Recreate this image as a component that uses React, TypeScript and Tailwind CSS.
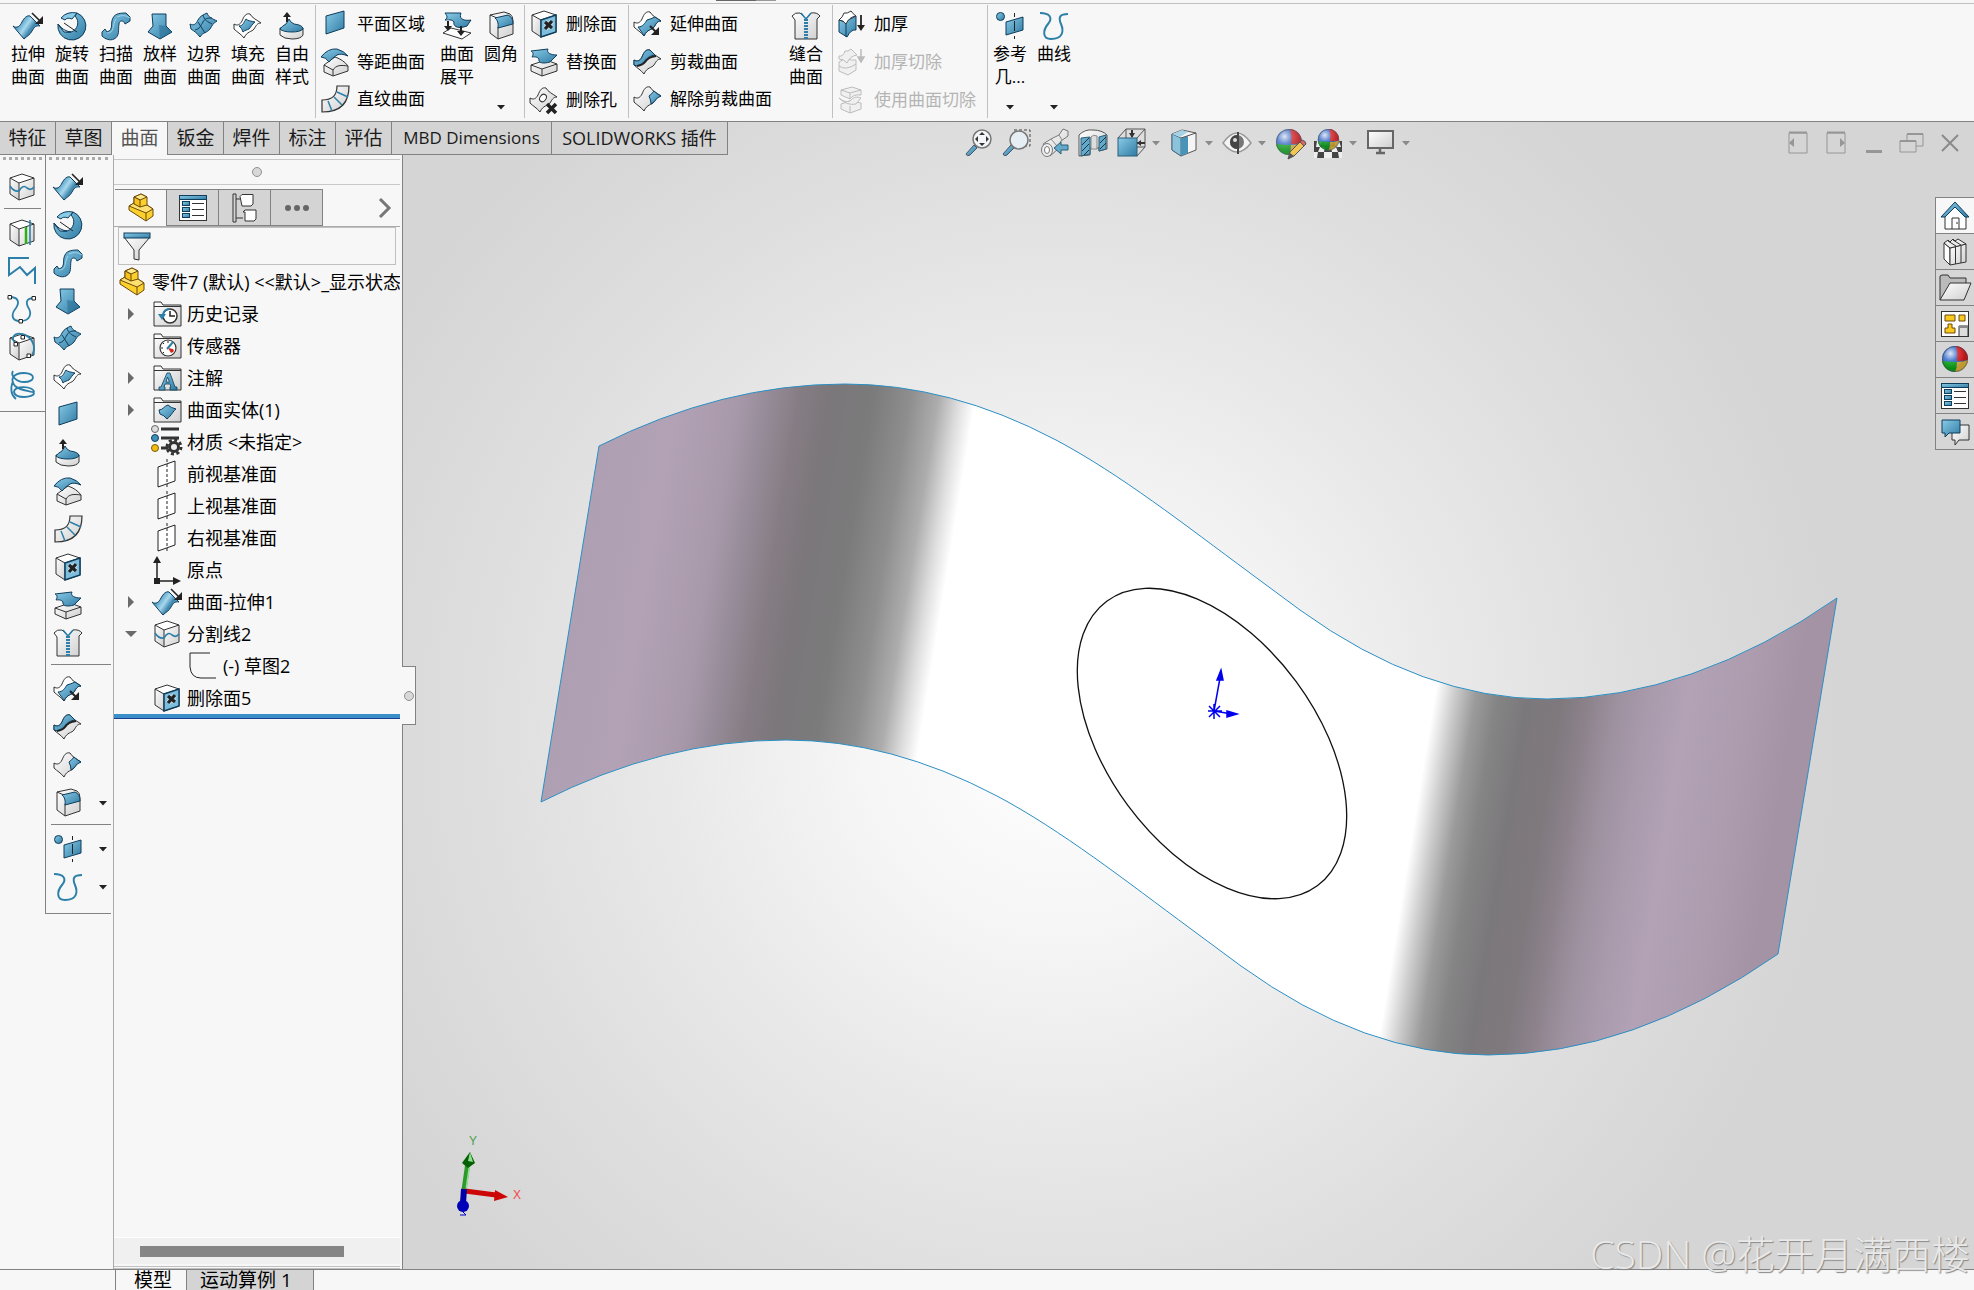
import { useState, type ReactNode } from "react";

const INK = "#333333";
const NAVY = "#0f3d5c";
const BLUE = "url(#gBlue)";
const WHITE = "url(#gWhite)";

const SHEET =
  "M0 12C3 14 6 13 8 9C10 4 12 1 16 2C18 6 23 8 27 11C23 11 22 14 20 17C18 20 13 19 10 26C7 22 3 20 0 17Z";

const Cube = () => (
  <>
    <path d="M2 5L14 1L26 5L11 10Z" fill="#fff" />
    <path d="M2 5L11 10V27L2 21Z" fill={WHITE} />
    <path d="M11 10L26 5V22L11 27Z" fill={WHITE} />
    <path d="M2 5L14 1L26 5V22L11 27L2 21ZM2 5L11 10L26 5M11 10V27" fill="none" stroke={INK} />
  </>
);

const Slab = () => (
  <>
    <path d="M1 17L16 12L27 16V23L12 28L1 23Z" fill={WHITE} stroke={INK} />
    <path d="M1 17L12 21L27 16M12 21V28" fill="none" stroke={INK} />
  </>
);

const Folder = () => (
  <>
    <path d="M1 24V2H8L10 5H28V26H1Z" fill={WHITE} stroke={INK} />
    <path d="M1 6.500H28" stroke={INK} />
  </>
);

const Ball = () => (
  <>
    <circle cx="14" cy="13" r="13" fill="#2f66c8" />
    <path d="M15 0A13 13 0 0 1 27 14Q21 15 16 15Q17 7 15 0Z" fill="#d8191d" />
    <path d="M1 15Q8 16 16 16Q16 22 14 26A13 13 0 0 1 1 15Z" fill="#0aa51c" />
    <path d="M16 16Q22 16 27 14A13 13 0 0 1 14 26Q16 22 16 16Z" fill="#e0b43a" />
    <circle cx="14" cy="13" r="12.500" fill="url(#gShine)" stroke="#444" strokeOpacity=".6" />
  </>
);

const List = () => (
  <>
    <rect x=".5" y="1.500" width="27" height="25" fill="#fff" stroke={INK} />
    <rect x=".5" y="1.500" width="27" height="4" fill={BLUE} stroke={NAVY} />
    {[8, 14, 20].map((y) => (
      <g key={y}>
        <rect x="3.500" y={y - 0.5} width="7" height="4" fill={BLUE} stroke={NAVY} />
        <path d={`M13 ${y + 1.5}H25`} stroke={INK} />
      </g>
    ))}
  </>
);

const icons: Record<string, ReactNode> = {
  extrude: (
    <>
      <path
        d="M-1 14C3 17 6 14 8 10C10 6 13 3 16 4L26 14C21 13 20 16 18 19C16 23 13 24 10 27Z"
        fill="url(#gWave)"
        stroke={NAVY}
      />
      <path d="M18 1L27 10" stroke="#222" strokeWidth="1.600" />
      <path d="M29 4V12H21Z" fill="#222" />
    </>
  ),
  revolve: (
    <>
      <path d="M19 1A14 14 0 1 1 0 12C3 18 8 21 13 20C20 18 22 9 17 4Z" fill={BLUE} stroke={NAVY} />
      <path d="M3 6Q9 -1 19 1L14 7Q9 5 7 8Z" fill="#8acbe8" stroke={NAVY} />
      <path d="M0 12L6 20L13 20Q5 19 0 12Z" fill="#d9ecf5" stroke={NAVY} />
      <path d="M6 11L19 20" stroke="#222" />
    </>
  ),
  sweep: (
    <>
      <path
        d="M0 20L3 17L5 20C12 18 8 11 11 6C13 1 20 1 24 1L28 5V9L23 12C22 8 17 8 17 12C16 18 18 24 12 27C8 29 3 27 0 24Z"
        fill={BLUE}
        stroke={NAVY}
      />
      <path d="M15 5C20 3 23 3 28 6M5 21C13 21 10 13 14 7" fill="none" stroke="#9fd3ea" />
    </>
  ),
  loft: (
    <>
      <path d="M6 2H20V14L26 20L14 27L2 20L7 14Z" fill={BLUE} stroke={NAVY} />
      <path d="M13 13L14 27L26 20L20 14Z" fill="#24688f" fillOpacity=".5" />
    </>
  ),
  boundary: (
    <>
      <path
        d="M0 12C4 14 6 12 8 8C10 4 13 3 17 1C18 5 23 7 27 9C23 11 22 14 20 17C17 21 13 20 10 25C7 21 4 19 1 17Z"
        fill={BLUE}
        stroke={NAVY}
      />
      <path d="M5 18C10 17 11 13 13 10C15 6 18 6 22 6M8 10L15 21M13 3C14 8 18 10 22 12" fill="none" stroke={NAVY} />
    </>
  ),
  fill: (
    <>
      <path d={SHEET} fill="#fff" stroke={INK} />
      <path d="M5 14C9 14 10 10 12 7C14 9 17 9 21 10C18 12 17 15 15 17C13 18 11 18 9 20Q8 16 5 14Z" fill={BLUE} stroke={NAVY} />
    </>
  ),
  freeform: (
    <>
      <path d="M2 16V23Q6 27 14 27Q23 27 25 23V16Z" fill={WHITE} stroke={INK} />
      <path d="M2 17Q4 14 8 12Q10 9 11 7Q12 10 16 12Q25 13 25 17Q22 20 14 20Q5 20 2 17Z" fill={BLUE} stroke={NAVY} />
      <path d="M9 10V3" stroke="#222" strokeWidth="2" />
      <path d="M5 5L9 0L13 5Z" fill="#222" />
    </>
  ),
  planar: <path d="M5 6L23 1V18L5 24Z" fill={BLUE} stroke={NAVY} />,
  offset: (
    <>
      <path d="M3 17L14 9C20 11 24 14 27 18V23L12 28L3 24Z" fill={WHITE} stroke={INK} />
      <path d="M3 17L12 22V28M12 22C15 17 20 17 27 18" fill="none" stroke={INK} />
      <path d="M0 9Q7 0 16 1Q23 3 27 8Q20 5 16 7Q11 10 8 14Q5 9 0 9Z" fill={BLUE} stroke={NAVY} />
    </>
  ),
  ruled: (
    <>
      <path d="M16 1H28C28 17 21 27 1 27V15C12 15 16 10 16 1Z" fill={WHITE} stroke={INK} strokeWidth="1.200" />
      <path d="M16 7L27 12M13 12L21 20M7 16L11 26" stroke="#2c7fa8" strokeWidth="1.500" />
    </>
  ),
  flatten: (
    <>
      <path d="M0 21L8 16L28 21L19 27Z" fill="#fff" stroke={INK} />
      <path d="M2 1H18C15 8 23 9 28 8L24 14C13 18 10 13 11 10C9 7 5 8 2 8C6 5 3 3 2 1Z" fill={BLUE} stroke={NAVY} />
      <path d="M5 9V16M18 14V21" stroke="#222" strokeWidth="2" />
      <path d="M1 14H9L5 19ZM14 19H22L18 24Z" fill="#222" />
    </>
  ),
  fillet: (
    <>
      <path d="M3 3L17 0L23 2Q26 4 26 9V22L11 27L3 21Z" fill={WHITE} stroke={INK} />
      <path d="M11 15V27" stroke={INK} />
      <path d="M3 3L10 6" stroke={INK} />
      <path d="M8 6L21 3Q26 5 26 12L11 16Q12 9 8 6Z" fill={BLUE} stroke={NAVY} />
    </>
  ),
  deleteFace: (
    <>
      <Cube />
      <path d="M11 10L26 5V22L11 27Z" fill="#7dbedc" stroke={NAVY} strokeWidth="1.500" />
      <path d="M15 12L22 18M22 11L15 19" stroke="#b5dced" strokeWidth="5.500" />
      <path d="M15 12L22 18M22 11L15 19" stroke="#222" strokeWidth="3.200" />
    </>
  ),
  replaceFace: (
    <>
      <Slab />
      <path d="M1 3L18 1C16 5 21 7 27 7L20 14C13 16 8 15 9 11C7 8 3 9 2 9C4 6 3 4 1 3Z" fill={BLUE} stroke={NAVY} />
    </>
  ),
  deleteHole: (
    <>
      <path d={SHEET} fill={WHITE} stroke={INK} />
      <ellipse cx="13" cy="12" rx="3" ry="4" fill="#fff" stroke={INK} transform="rotate(35 13 12)" />
      <path d="M17 18L26 27M26 18L17 27" stroke="#222" strokeWidth="3.500" />
    </>
  ),
  extend: (
    <>
      <path d={SHEET} fill="#fff" stroke={INK} />
      <path d="M4 17C9 17 11 13 13 10Q17 9 21 7Q24 9 27 11C23 11 22 14 20 17C18 20 13 19 10 26C8 22 6 20 4 17Z" fill={BLUE} stroke={NAVY} />
      <path d="M16 16L23 23" stroke="#222" strokeWidth="2" />
      <path d="M25 17V25H17Z" fill="#222" />
    </>
  ),
  trim: (
    <>
      <path d={SHEET} fill={WHITE} stroke={INK} />
      <path d="M0 12C3 14 6 13 8 9C10 4 12 1 16 2L21 7C16 8 14 9 11 13Q9 16 3 18L0 17Z" fill={BLUE} stroke={NAVY} />
      <path d="M3 18Q9 17 11 14Q14 9 22 8" fill="none" stroke="#222" strokeWidth="2" />
    </>
  ),
  untrim: (
    <>
      <path d={SHEET} fill={WHITE} stroke={INK} />
      <path d="M15 11Q18 9 20 6Q23 9 27 11Q23 12 20 17L17 19Q17 15 15 11Z" fill={BLUE} stroke={NAVY} />
    </>
  ),
  knit: (
    <>
      <path d="M0 4Q3 0 8 1L14 7L19 1Q25 0 28 4L25 7V27H3V8Z" fill={WHITE} stroke={INK} />
      <path d="M9 1L14 7L19 1" fill="none" stroke="#2c7fa8" strokeWidth="1.500" />
      <path d="M14 7V27" stroke="#2c7fa8" strokeWidth="4" strokeDasharray="2 1" />
    </>
  ),
  thicken: (
    <>
      <path d="M1 10L7 12Q12 9 18 6V20Q13 19 9 27L1 22Z" fill={BLUE} stroke={NAVY} />
      <path d="M1 10Q5 7 6 3Q9 4 13 1Q15 4 18 6Q11 7 8 14Q5 10 1 10Z" fill="#fff" stroke={INK} />
      <path d="M8 14V27" stroke={NAVY} />
      <path d="M23 5V17" stroke="#222" strokeWidth="1.800" />
      <path d="M19 15H27L23 21Z" fill="#222" />
    </>
  ),
  thickenCut: (
    <g stroke="#bcbcbc" fill="#f0f0f0">
      <path d="M1 14L8 10Q14 13 18 12V22L10 27L1 23Z" />
      <path d="M1 8Q5 9 7 3Q10 4 13 1L19 7Q12 8 9 15Q6 11 1 11Z" />
      <path d="M1 18Q8 23 18 16" fill="none" />
      <path d="M23 1V12M20 9L23 14L26 9Z" fill="#bcbcbc" strokeWidth="1.500" />
    </g>
  ),
  surfaceCut: (
    <g stroke="#bcbcbc" fill="#f0f0f0">
      <path d="M3 4L14 1L23 4V9Q15 8 12 13L3 9Z" />
      <path d="M3 4L12 7L23 4M12 7V13" fill="none" />
      <path d="M3 18L12 15L23 17V23L12 27L3 23Z" />
      <path d="M1 12Q7 17 12 15Q17 9 23 12L18 18Q9 20 1 12ZM12 20V27" />
    </g>
  ),
  refGeom: (
    <>
      <circle cx="4.500" cy="4.500" r="4" fill={BLUE} stroke={NAVY} />
      <path d="M10 10L27 5V18L10 23Z" fill={BLUE} stroke={NAVY} />
      <path d="M18.500 1V5M18.500 9V19M18.500 24V27" stroke="#222" />
    </>
  ),
  curve: (
    <path
      d="M0 1C10 1 13 6 8 12C3 18 2 27 11 27C23 27 24 19 21 12C18 5 20 2 28 2"
      fill="none"
      stroke="#2c7fa8"
      strokeWidth="2"
    />
  ),
  splitLine: (
    <>
      <Cube />
      <path d="M2 13Q6 19 11 18Q15 11 19 15Q23 18 26 14" fill="none" stroke="#2c7fa8" strokeWidth="1.600" />
    </>
  ),
  project: (
    <>
      <Cube />
      <path d="M18 8V25" stroke="#2cb016" strokeWidth="2.500" />
      <path d="M22 1V26" stroke="#2c7fa8" strokeWidth="1.600" />
    </>
  ),
  polyline: (
    <path d="M21 1H1V18L12 10L19 18L27 11V27" fill="none" stroke="#2c7fa8" strokeWidth="2" />
  ),
  curvePoints: (
    <>
      <path d="M2 2C10 2 12 7 8 13C3 19 3 26 12 26C23 26 24 18 20 12C17 6 20 3 26 3" fill="none" stroke="#2c7fa8" strokeWidth="1.800" />
      <path d="M0 .5H3.500V4H0ZM24 1.500H27.500V5H24ZM11 24.500H14.500V28H11Z" fill="#fff" stroke="#222" />
    </>
  ),
  curveOnBox: (
    <>
      <Cube />
      <path d="M8 10C2 6 6 -1 14 1C24 3 29 14 24 22" fill="none" stroke="#2c7fa8" strokeWidth="1.800" />
      <path d="M6 9.500H9.500V13H6ZM13 2.500H16.500V6H13ZM19 21H22.500V24.500H19Z" fill="#fff" stroke="#222" />
    </>
  ),
  helix: (
    <path
      d="M5 0C2 5 9 11 16 11C28 11 28 2 16 2C4 2 2 9 7 15M7 15C12 20 26 20 26 22C26 27 7 28 6 21C6 14 26 15 26 21M5 10C2 18 3 24 8 28"
      fill="none"
      stroke="#2c7fa8"
      strokeWidth="1.800"
    />
  ),
  part: (
    <>
      <path d="M2 12L7 9V3L14 0L20 3V11L26 15V22L19 27L2 16Z" fill="#fbcf2c" stroke="#6b4a0a" />
      <path d="M7 3L13 6L20 3L14 0Z" fill="#fde98a" stroke="#6b4a0a" />
      <path d="M2 12L7 9L13 13L20 11L26 15L19 19Z" fill="#fde070" stroke="#6b4a0a" />
      <path d="M7 3L13 6V13L7 10Z" fill="#f7c01f" stroke="#6b4a0a" />
      <path d="M19 19V27" stroke="#6b4a0a" />
    </>
  ),
  list: <List />,
  config: (
    <>
      <path d="M2 0V28H5V24H12M5 5H11V8M2 0H5V24" fill="none" stroke={INK} />
      <path d="M9 2.500L11 .5H22V10L20 12H11ZM12 18L14 16H25V25L23 27H14V18Z" fill="#fff" stroke={INK} />
    </>
  ),
  dots: (
    <g fill="#666">
      <circle cx="5" cy="14" r="3" />
      <circle cx="14" cy="14" r="3" />
      <circle cx="23" cy="14" r="3" />
    </g>
  ),
  funnel: (
    <>
      <path d="M1 5L11 18V27L16 28V18L27 5Z" fill={WHITE} stroke={INK} />
      <rect x="1" y="1" width="26" height="5" fill={BLUE} stroke={NAVY} />
    </>
  ),
  history: (
    <>
      <Folder />
      <circle cx="17" cy="16" r="7" fill="#fff" stroke={INK} strokeWidth="1.500" />
      <path d="M17 11V16H22" stroke="#222" strokeWidth="1.500" fill="none" />
      <path d="M16 9A7 7 0 0 0 10 15" stroke="#2c7fa8" strokeWidth="2" fill="none" />
      <path d="M5 14H13L9 20Z" fill="#2c7fa8" />
    </>
  ),
  sensor: (
    <>
      <Folder />
      <circle cx="15" cy="16" r="8" fill="#fff" stroke={INK} strokeWidth="1.200" />
      <path d="M15 16L20 17L21 19A8 8 0 0 1 18 21Z" fill="#d8251d" />
      <path d="M14 17L20 10" stroke="#2c7fa8" strokeWidth="2" />
      <path d="M8 16H10M10 11L11 12M15 9V11M10 21L11 20" stroke="#222" />
    </>
  ),
  note: (
    <>
      <Folder />
      <path
        d="M14 9H17L22 23H24V26H17V23H18L17 20H12L11 23H12V26H6V23H8ZM14.500 13L13 18H16.500Z"
        fill={BLUE}
        fillRule="evenodd"
        stroke={NAVY}
        strokeWidth=".8"
      />
    </>
  ),
  bodies: (
    <>
      <Folder />
      <path d="M6 14C10 14 11 10 15 9Q18 12 23 13C20 15 19 19 14 23Q11 19 7 18Z" fill={BLUE} stroke={NAVY} />
    </>
  ),
  material: (
    <>
      <circle cx="2" cy="1" r="3.500" fill="#ddd" stroke="#666" />
      <circle cx="2" cy="10" r="3.500" fill="#3f90b8" stroke={NAVY} />
      <circle cx="2" cy="20" r="3.500" fill="#f1bd14" stroke="#7a5a05" />
      <path d="M8 1H26M8 10H26M8 20H15" stroke="#333" strokeWidth="3" />
      <circle cx="21" cy="19" r="7" fill="none" stroke="#333" strokeWidth="3" strokeDasharray="3 2.500" />
      <circle cx="21" cy="19" r="4.500" fill="#eee" stroke="#333" strokeWidth="3" />
    </>
  ),
  plane: (
    <>
      <path d="M5 7L22 1V21L5 27Z" fill="#fff" stroke="#222" />
      <path d="M14 -1V29" stroke="#222" strokeDasharray="3 2" />
    </>
  ),
  origin: (
    <>
      <path d="M4 3V25H24" fill="none" stroke="#222" strokeWidth="1.500" />
      <path d="M0 7L4 0L8 7ZM20 21L28 25L20 29ZM1 22H7V28H1Z" fill="#222" />
    </>
  ),
  sketch: <path d="M21 1H1V15Q2 26 12 26H27" fill="none" stroke="#222" />,
  zoomFit: (
    <>
      <path d="M9 16L12 19L5 26Q2 28 1 25Z" fill={BLUE} stroke="#456" />
      <circle cx="17" cy="10" r="9" fill="#f2f6f8" stroke="#777" strokeWidth="1.500" />
      <path d="M17 3L20 6H14ZM17 17L20 14H14ZM10 10L13 7V13ZM24 10L21 7V13Z" fill="#333" />
    </>
  ),
  zoomArea: (
    <>
      <path d="M11 1H27V17H22" fill="none" stroke="#444" strokeDasharray="3 2" />
      <path d="M8 16L11 19L4 26Q1 28 0 25Z" fill={BLUE} stroke="#456" />
      <circle cx="16" cy="11" r="9" fill="#e5eef2" stroke="#777" strokeWidth="1.500" />
    </>
  ),
  prevView: (
    <>
      <path d="M2 15L10 10L18 6L22 0L27 2L27 7L20 12L17 20L9 27Z" fill={WHITE} stroke="#777" />
      <path d="M10 10L16 17M18 6L21 11" stroke="#888" />
      <ellipse cx="6" cy="21" rx="5.500" ry="6.500" fill="#eee" stroke="#777" />
      <ellipse cx="6" cy="21" rx="2.500" ry="3.500" fill="#fff" stroke="#777" />
      <path d="M27 16V21H20V25L13 19L20 13V16Z" fill="#63a9ca" stroke="#2c5f78" />
    </>
  ),
  section: (
    <>
      <path d="M0 6Q6 0 14 1Q23 1 28 6V20L20 22V19H11V26L0 27Z" fill={WHITE} stroke="#555" />
      <path d="M12 8Q14 5 18 7V20H12Z" fill="#ddd" stroke="#888" />
      <path d="M2 9L11 8V25L2 27ZM20 8L27 6V20L20 22Z" fill="#63a9ca" stroke="#2c5f78" />
      <path d="M3 16L10 9M3 22L10 15M5 26L10 21M21 14L27 8M21 20L27 14" stroke="#234" />
    </>
  ),
  orient: (
    <>
      <path d="M1 9L9 0H28V18L20 27M9 0V9M20 9L28 0M20 18H28" fill="none" stroke="#555" />
      <path d="M15 1V8M28 14H20" stroke="#333" strokeWidth="2" />
      <path d="M12 4H18L15 9ZM24 11V17L20 14Z" fill="#333" />
      <rect x="1" y="9" width="19" height="18" fill={BLUE} stroke="#2c5f78" />
    </>
  ),
  display: (
    <>
      <path d="M2 5L12 1L26 4V21L11 27L2 21Z" fill="#f5f5f5" stroke="#555" />
      <path d="M2 5L11 9V27L2 21Z" fill="#8cc3dc" stroke="#4b6d7c" />
      <path d="M11 9L18 7V24L11 27Z" fill="#4a93b8" />
      <path d="M2 5L12 1L18 3L10 8Z" fill="#a6d2e5" />
      <path d="M11 9L26 4" stroke="#555" />
    </>
  ),
  eye: (
    <>
      <path d="M0 14Q14 -6 28 14Q14 32 0 14Z" fill="#f4f4f4" stroke="#999" strokeWidth="1.500" />
      <circle cx="14" cy="13" r="7" fill="#777" />
      <path d="M14 6A7 7 0 0 0 14 20Z" fill="#444" />
      <circle cx="12" cy="11" r="2" fill="#ddd" />
      <path d="M15 3V25" stroke="#444" strokeWidth="2" />
    </>
  ),
  appearance: (
    <>
      <g transform="translate(-1 0)" opacity=".85">
        <Ball />
      </g>
      <path d="M12 30L14 23L24 13L28 17L18 27Z" fill="#f0c552" stroke="#555" />
      <path d="M24 13L26 11Q30 12 30 15L28 17Z" fill="#d9646b" stroke="#555" />
      <path d="M12 30L14 24L18 27Z" fill="#555" />
    </>
  ),
  scene: (
    <>
      <rect x="0" y="12" width="28" height="17" fill="#444" />
      <path d="M3 12H8L6 18H2ZM20 12H25L27 18H22ZM6 18H11L10 23H4ZM17 18H22L24 23H18ZM0 23H4L3 29H0ZM10 23H18V29H10ZM24 23H28V29H25Z" fill="#eee" />
      <g transform="translate(3 0) scale(.82)" opacity=".9">
        <Ball />
      </g>
    </>
  ),
  monitor: (
    <>
      <rect x="1" y="2" width="25" height="17" fill={WHITE} stroke="#666" strokeWidth="2" />
      <path d="M13 20V23M9 24H18" stroke="#666" strokeWidth="2.500" />
    </>
  ),
  paneLeft: (
    <>
      <path d="M5 4H23V24H5Z" fill="none" stroke="#969696" />
      <path d="M5 3.500H23" stroke="#969696" strokeWidth="2" />
      <path d="M10 9V18L5 14Z" fill="#969696" />
    </>
  ),
  paneRight: (
    <>
      <path d="M5 4H23V24H5Z" fill="none" stroke="#969696" />
      <path d="M5 3.500H23" stroke="#969696" strokeWidth="2" />
      <path d="M18 9V18L23 14Z" fill="#969696" />
    </>
  ),
  minimize: <path d="M6 22.500H22" stroke="#969696" strokeWidth="3" />,
  restore: (
    <>
      <path d="M9 11V5H25V17H18M2 12H18V23H2Z" fill="none" stroke="#969696" />
      <path d="M9 5H25M2 12H18" stroke="#969696" strokeWidth="2" />
    </>
  ),
  close: <path d="M6 6L22 22M22 6L6 22" stroke="#8a8a8a" strokeWidth="2" />,
  home: (
    <>
      <path d="M4 14L14 4L25 14V27H4Z" fill="#fff" stroke={INK} />
      <path d="M11 27V16H18V27M15 21H17" fill="none" stroke={INK} />
      <path d="M0 15L14 0L28 15H24L14 5L4 15Z" fill={BLUE} stroke={NAVY} />
    </>
  ),
  books: (
    <>
      <path d="M3 5L9 10V27L3 21Z" fill="#fff" stroke={INK} />
      <path d="M9 10L25 6V24L9 27Z" fill={WHITE} stroke={INK} />
      <path d="M3 5L7 2L9 4L12 1L14 3L17 1L25 6L9 10Z" fill="#eee" stroke={INK} />
      <path d="M7 3L15 8M12 2L20 7M14.500 9V26M20 8V25" stroke={INK} fill="none" />
    </>
  ),
  openFolder: (
    <>
      <path d="M-1 26V2L1 1H7L9 4H25V10" fill="#bbb" stroke={INK} />
      <path d="M-1 26L9 9H30L23 26Z" fill={WHITE} stroke={INK} />
    </>
  ),
  palette: (
    <>
      <rect x=".5" y="1.500" width="27" height="25" fill="#fff" stroke={INK} />
      <path d="M4 5H14V11H4ZM18 5H24V11H18ZM7 14H11V18H14V23H4V18H7Z" fill="#fbc81e" stroke="#6b4a0a" />
      <path d="M18 26V16H27V26" fill="#ddd" stroke={INK} />
      <path d="M18 17H27" stroke="#888" strokeWidth="2" />
    </>
  ),
  ball: <Ball />,
  chat: (
    <>
      <path d="M11 7H28V22H18L14 27V22H11Z" fill={WHITE} stroke={INK} />
      <path d="M1 2H19V15H8L4 19V15H1Z" fill={BLUE} stroke={NAVY} />
    </>
  ),
};

const Icon = ({ name }: { name: string }) => (
  <svg viewBox="0 0 28 28" className="h-7 w-7 shrink-0 overflow-visible" aria-hidden="true">
    {icons[name]}
  </svg>
);

const Caret = ({ className }: { className?: string }) => (
  <svg viewBox="0 0 8 5" className={`h-[5px] w-2 shrink-0 ${className ?? ""}`} aria-hidden="true">
    <path d="M0 0H8L4 4.500Z" fill="currentColor" />
  </svg>
);

type Tool = { icon: string; label: string; lines?: string[]; menu?: boolean; disabled?: boolean };

const BigTool = ({ icon, label, lines, menu }: Tool) => (
  <button type="button" className="flex h-full w-11 flex-col items-center pt-[7px]" aria-label={label}>
    <Icon name={icon} />
    <span className="mt-0.5 leading-[23px]">
      {(lines ?? [label]).map((line) => (
        <span key={line} className="block whitespace-nowrap">
          {line}
        </span>
      ))}
    </span>
    {menu && <Caret className="mt-auto mb-2 text-[#222]" />}
  </button>
);

const RowTools = ({ tools }: { tools: Tool[] }) => (
  <div className="flex flex-col pl-[5px]">
    {tools.map((t) => (
      <button
        key={t.label}
        type="button"
        disabled={t.disabled}
        className="flex h-[38px] items-center gap-2 whitespace-nowrap disabled:text-[#b4b4b4]"
      >
        <Icon name={t.icon} />
        {t.label}
      </button>
    ))}
  </div>
);

const Divider = () => <div className="h-[113px] w-px bg-[#c0c0c0]" />;

const surfaceTools: Tool[] = [
  { icon: "extrude", label: "拉伸曲面", lines: ["拉伸", "曲面"] },
  { icon: "revolve", label: "旋转曲面", lines: ["旋转", "曲面"] },
  { icon: "sweep", label: "扫描曲面", lines: ["扫描", "曲面"] },
  { icon: "loft", label: "放样曲面", lines: ["放样", "曲面"] },
  { icon: "boundary", label: "边界曲面", lines: ["边界", "曲面"] },
  { icon: "fill", label: "填充曲面", lines: ["填充", "曲面"] },
  { icon: "freeform", label: "自由样式", lines: ["自由", "样式"] },
];

const Ribbon = () => (
  <header className="h-[122px] shrink-0 border-b border-[#828282] bg-[#f7f7f7] text-[17px] text-black">
    <div className="flex h-1 items-start border-b border-[#c0c0c0] pl-[716px]">
      <div className="h-px w-10 bg-[#666]" />
      <div className="h-px w-5 bg-[#999]" />
    </div>
    <div className="flex h-[114px] pt-px">
      <div className="flex pl-1.5 pr-px">
        {surfaceTools.map((t) => (
          <BigTool key={t.label} {...t} />
        ))}
      </div>
      <Divider />
      <RowTools
        tools={[
          { icon: "planar", label: "平面区域" },
          { icon: "offset", label: "等距曲面" },
          { icon: "ruled", label: "直纹曲面" },
        ]}
      />
      <div className="flex pl-2.5 pr-px">
        <BigTool icon="flatten" label="曲面展平" lines={["曲面", "展平"]} />
        <BigTool icon="fillet" label="圆角" menu />
      </div>
      <Divider />
      <div className="pr-[11px]">
        <RowTools
          tools={[
            { icon: "deleteFace", label: "删除面" },
            { icon: "replaceFace", label: "替换面" },
            { icon: "deleteHole", label: "删除孔" },
          ]}
        />
      </div>
      <Divider />
      <RowTools
        tools={[
          { icon: "extend", label: "延伸曲面" },
          { icon: "trim", label: "剪裁曲面" },
          { icon: "untrim", label: "解除剪裁曲面" },
        ]}
      />
      <div className="pl-3 pr-1">
        <BigTool icon="knit" label="缝合曲面" lines={["缝合", "曲面"]} />
      </div>
      <Divider />
      <div className="pr-[11px]">
        <RowTools
          tools={[
            { icon: "thicken", label: "加厚" },
            { icon: "thickenCut", label: "加厚切除", disabled: true },
            { icon: "surfaceCut", label: "使用曲面切除", disabled: true },
          ]}
        />
      </div>
      <Divider />
      <BigTool icon="refGeom" label="参考几何体" lines={["参考", "几..."]} menu />
      <BigTool icon="curve" label="曲线" menu />
    </div>
  </header>
);

const commandTabs = [
  { label: "特征", size: "w-14 text-[19px]" },
  { label: "草图", size: "w-14 text-[19px]" },
  { label: "曲面", size: "w-14 text-[19px]" },
  { label: "钣金", size: "w-14 text-[19px]" },
  { label: "焊件", size: "w-14 text-[19px]" },
  { label: "标注", size: "w-14 text-[19px]" },
  { label: "评估", size: "w-14 text-[19px]" },
  { label: "MBD Dimensions", size: "w-40 text-[17px]" },
  { label: "SOLIDWORKS 插件", size: "w-44 text-[18px]" },
];

const CommandTabs = () => {
  const [active, setActive] = useState("曲面");

  return (
    <nav className="flex h-[33px] shrink-0 text-[#1a1a1a]">
      {commandTabs.map((tab) => (
        <button
          key={tab.label}
          type="button"
          onClick={() => setActive(tab.label)}
          className={`flex items-center justify-center whitespace-nowrap border-r border-[#828282] ${tab.size} ${
            active === tab.label ? "bg-[#f7f7f7] text-[#555]" : "border-b bg-[#d4d4d4]"
          }`}
        >
          {tab.label}
        </button>
      ))}
    </nav>
  );
};

const curveTools = ["project", "polyline", "curvePoints", "curveOnBox", "helix"];
const sideTools = [
  "extrude",
  "revolve",
  "sweep",
  "loft",
  "boundary",
  "fill",
  "planar",
  "freeform",
  "offset",
  "ruled",
  "deleteFace",
  "replaceFace",
  "knit",
];

const Grip = () => <div className="mx-[3px] mt-0.5 h-[3px] border-t-[3px] border-dotted border-[#aaa]" />;

const SideTool = ({ name, menu }: { name: string; menu?: boolean }) => (
  <button type="button" aria-label={name} className="flex h-[38px] w-full items-center pl-2">
    <Icon name={name} />
    {menu && <Caret className="ml-[17px] text-[#222]" />}
  </button>
);

const SideBars = () => (
  <div className="flex w-[113px] shrink-0 items-start bg-[#f7f7f7]">
    <div className="w-[45px] border-b border-[#828282] pb-[7px]">
      <Grip />
      <div className="mt-2">
        <SideTool name="splitLine" />
      </div>
      <hr className="mx-1 mt-0.5 mb-[5px] border-[#828282]" />
      {curveTools.map((t) => (
        <SideTool key={t} name={t} />
      ))}
    </div>
    <div className="w-[66px] border-b border-l border-[#828282] pb-[7px]">
      <Grip />
      <div className="mt-2">
        {sideTools.map((t) => (
          <SideTool key={t} name={t} />
        ))}
      </div>
      <hr className="mt-0.5 mb-[5px] ml-[5px] border-[#828282]" />
      <SideTool name="extend" />
      <SideTool name="trim" />
      <SideTool name="untrim" />
      <SideTool name="fillet" menu />
      <hr className="mt-0.5 mb-[5px] ml-[5px] border-[#828282]" />
      <SideTool name="refGeom" menu />
      <SideTool name="curve" menu />
    </div>
  </div>
);

type TreeItem = { icon: string; label: string; arrow?: "right" | "down"; child?: boolean };

const treeItems: TreeItem[] = [
  { icon: "history", label: "历史记录", arrow: "right" },
  { icon: "sensor", label: "传感器" },
  { icon: "note", label: "注解", arrow: "right" },
  { icon: "bodies", label: "曲面实体(1)", arrow: "right" },
  { icon: "material", label: "材质 <未指定>" },
  { icon: "plane", label: "前视基准面" },
  { icon: "plane", label: "上视基准面" },
  { icon: "plane", label: "右视基准面" },
  { icon: "origin", label: "原点" },
  { icon: "extrude", label: "曲面-拉伸1", arrow: "right" },
  { icon: "splitLine", label: "分割线2", arrow: "down" },
  { icon: "sketch", label: "(-) 草图2", child: true },
  { icon: "deleteFace", label: "删除面5" },
];

const TreePanel = () => (
  <aside className="relative flex w-[290px] shrink-0 flex-col border-l border-r border-l-[#ababab] border-r-[#828282] bg-[#f7f7f7] pr-0.5">
    <div className="mt-1 flex h-[26px] items-center justify-center border-y border-[#c8c8c8]">
      <span className="h-[10px] w-[10px] rounded-full border border-[#909090] bg-[#d8d8d8]" />
    </div>
    <div className="mt-1 flex h-[38px] items-stretch border-b border-[#ababab] pl-px">
      {["part", "list", "config", "dots"].map((name, i) => (
        <button
          key={name}
          type="button"
          aria-label={name}
          className={`flex w-[52px] items-center justify-center border-r border-t border-[#828282] ${
            i === 0 ? "bg-[#f7f7f7]" : "border-b bg-[#d4d4d4]"
          }`}
        >
          <Icon name={name} />
        </button>
      ))}
      <button type="button" aria-label="expand" className="ml-auto mr-2">
        <svg viewBox="0 0 14 20" className="h-5 w-3.5">
          <path d="M2 1L11 10L2 19" fill="none" stroke="#777" strokeWidth="3" />
        </svg>
      </button>
    </div>
    <label className="mx-1 flex h-[38px] items-center border border-[#c0c0c0] pl-1">
      <Icon name="funnel" />
      <input aria-label="filter" className="min-w-0 flex-1 bg-transparent px-2 text-[18px] outline-none" />
    </label>
    <div className="overflow-hidden pt-px text-[18px] text-black">
      <div className="flex h-8 items-center gap-1.5 whitespace-nowrap pl-1">
        <Icon name="part" />
        <span>零件7 (默认) &lt;&lt;默认&gt;_显示状态</span>
      </div>
      <ul>
        {treeItems.map((item) => (
          <li key={item.label} className={`flex h-8 items-center whitespace-nowrap ${item.child ? "pl-9" : ""}`}>
            <span className="flex w-[39px] justify-center pr-1.5">
              {item.arrow === "right" && (
                <svg viewBox="0 0 6 12" className="h-3 w-1.5">
                  <path d="M0 0L6 6L0 12Z" fill="#6a6a6a" />
                </svg>
              )}
              {item.arrow === "down" && (
                <svg viewBox="0 0 12 6" className="h-1.5 w-3">
                  <path d="M0 0H12L6 6Z" fill="#6a6a6a" />
                </svg>
              )}
            </span>
            <Icon name={item.icon} />
            <span className="ml-1.5">{item.label}</span>
          </li>
        ))}
      </ul>
    </div>
    <div className="h-[5px] border-b border-[#1c3f94] bg-[#3a8fc8]" />
    <div className="mt-auto mb-[2px] h-[27px] border-t border-white bg-[#f0f0f0] pl-[26px] pt-2">
      <div className="h-[11px] w-[204px] bg-[#858585]" />
    </div>
    <div className="h-[3px] border-y border-[#c0c0c0]" />
    <div className="absolute -right-[14px] top-[511px] flex h-[59px] w-[14px] items-center justify-center border border-l-0 border-[#828282] bg-[#f7f7f7]">
      <span className="h-[10px] w-[10px] rounded-full border border-[#909090] bg-[#d8d8d8]" />
    </div>
  </aside>
);

const SURFACE =
  "M599 446Q722 384 845 384Q950 384 1056 440C1120 474 1185 525 1250 573L1300 610Q1423 699 1547 699Q1692 699 1837 598" +
  "L1778 954Q1633 1055 1488 1055Q1364 1055 1241 966L1191 929C1126 881 1061 830 997 796Q891 740 786 740Q663 740 541 802Z";

const Canvas = () => (
  <svg
    viewBox="0 122 1974 1147"
    preserveAspectRatio="xMidYMid slice"
    className="absolute inset-0 h-full w-full"
    aria-hidden="true"
  >
    <defs>
      <linearGradient id="gBlue" x1="0" y1="0" x2="1" y2="1">
        <stop offset="0" stopColor="#8acbe8" />
        <stop offset="1" stopColor="#2f7ba3" />
      </linearGradient>
      <linearGradient id="gWave" x1="0" y1="0" x2="1" y2=".6">
        <stop offset="0" stopColor="#2f7ba3" />
        <stop offset=".35" stopColor="#5ba5c9" />
        <stop offset=".55" stopColor="#a8d8ee" />
        <stop offset=".75" stopColor="#3d86ad" />
        <stop offset="1" stopColor="#7dbfdd" />
      </linearGradient>
      <linearGradient id="gWhite" x1="0" y1="0" x2="1" y2="1">
        <stop offset="0" stopColor="#ffffff" />
        <stop offset="1" stopColor="#cfcfcf" />
      </linearGradient>
      <radialGradient id="gShine" cx=".32" cy=".28" r=".6">
        <stop offset="0" stopColor="#fff" stopOpacity=".85" />
        <stop offset=".5" stopColor="#fff" stopOpacity=".15" />
        <stop offset="1" stopColor="#000" stopOpacity=".15" />
      </radialGradient>
      <radialGradient id="gBack" gradientUnits="userSpaceOnUse" cx="1060" cy="730" r="780">
        <stop offset="0" stopColor="#ffffff" />
        <stop offset=".25" stopColor="#f6f6f6" />
        <stop offset=".5" stopColor="#e9e9e9" />
        <stop offset=".75" stopColor="#dedede" />
        <stop offset="1" stopColor="#d5d5d5" />
      </radialGradient>
      <linearGradient
        id="gSurface"
        gradientUnits="userSpaceOnUse"
        x1="599"
        y1="0"
        x2="1837"
        y2="0"
        gradientTransform="matrix(1 0 -.163 1 72.700 0)"
      >
        <stop offset="0" stopColor="#ae9fb2" />
        <stop offset=".055" stopColor="#b3a2b6" />
        <stop offset=".105" stopColor="#a899aa" />
        <stop offset=".13" stopColor="#968b98" />
        <stop offset=".155" stopColor="#867d84" />
        <stop offset=".18" stopColor="#7b777b" />
        <stop offset=".215" stopColor="#7b7b7b" />
        <stop offset=".245" stopColor="#8e8e8e" />
        <stop offset=".268" stopColor="#adadad" />
        <stop offset=".284" stopColor="#dcdcdc" />
        <stop offset=".298" stopColor="#ffffff" />
        <stop offset=".708" stopColor="#ffffff" />
        <stop offset=".724" stopColor="#cccccc" />
        <stop offset=".741" stopColor="#9b9b9b" />
        <stop offset=".758" stopColor="#858585" />
        <stop offset=".783" stopColor="#7b787b" />
        <stop offset=".811" stopColor="#7f797e" />
        <stop offset=".831" stopColor="#8b818a" />
        <stop offset=".856" stopColor="#9d919f" />
        <stop offset=".88" stopColor="#a899ab" />
        <stop offset=".912" stopColor="#b3a2b6" />
        <stop offset=".96" stopColor="#ac9cae" />
        <stop offset="1" stopColor="#a393a5" />
      </linearGradient>
    </defs>
    <rect y="122" width="1974" height="1147" fill="url(#gBack)" />
    <path d={SURFACE} fill="url(#gSurface)" stroke="#2b8fc4" />
    <ellipse
      cx="1212"
      cy="743.500"
      rx="177"
      ry="104.500"
      transform="rotate(53.500 1212 743.500)"
      fill="none"
      stroke="#111"
      strokeWidth="1.300"
    />
    {/* model origin */}
    <g stroke="#0000ee" fill="#0000ee" strokeWidth="1.500">
      <path d="M1209 706L1220 717M1220 706L1209 717M1214 704V719M1208 711H1222M1214 711L1220 678M1214 711L1232 714" />
      <path d="M1221 670L1217 680H1223ZM1237 714L1227 711V717Z" />
    </g>
    {/* view triad */}
    <g>
      <path d="M464 1190L468 1162" stroke="#2b9a2b" strokeWidth="5" />
      <path d="M466 1190L470 1162" stroke="#8fe08f" strokeWidth="1.500" />
      <path d="M470 1152L475 1163L468 1168L462 1163Z" fill="#056005" />
      <path d="M470 1152L473 1162L468 1161Z" fill="#8fe08f" />
      <path d="M465 1191L496 1195" stroke="#cc0606" strokeWidth="5" />
      <path d="M508 1197L495 1190L494 1201Z" fill="#cc0606" />
      <path d="M464 1189L463 1203" stroke="#0000a8" strokeWidth="6" />
      <circle cx="463" cy="1206" r="6" fill="#0000b8" />
      <path d="M460 1215H466L462 1211" stroke="#0000cc" fill="none" />
      <g fontFamily="Liberation Sans, sans-serif" fontSize="12">
        <text x="469" y="1145" fill="#4aa04a">
          Y
        </text>
        <text x="513" y="1199" fill="#f04848">
          X
        </text>
      </g>
    </g>
  </svg>
);

const viewTools: Tool[] = [
  { icon: "zoomFit", label: "zoom to fit" },
  { icon: "zoomArea", label: "zoom to area" },
  { icon: "prevView", label: "previous view" },
  { icon: "section", label: "section view" },
  { icon: "orient", label: "view orientation", menu: true },
  { icon: "display", label: "display style", menu: true },
  { icon: "eye", label: "hide or show items", menu: true },
  { icon: "appearance", label: "edit appearance" },
  { icon: "scene", label: "apply scene", menu: true },
  { icon: "monitor", label: "view settings", menu: true },
];

const taskTabs = ["home", "books", "openFolder", "palette", "ball", "list", "chat"];

const ViewOverlay = () => (
  <>
    <div className="absolute left-[401px] right-0 top-[7px] flex justify-center gap-2.5">
      {viewTools.map((t) => (
        <button key={t.icon} type="button" aria-label={t.label} className="flex items-center gap-[7px]">
          <Icon name={t.icon} />
          {t.menu && <Caret className="text-[#8a8a8a]" />}
        </button>
      ))}
    </div>
    <div className="absolute right-2.5 top-[7px] flex gap-2.5">
      {["paneLeft", "paneRight", "minimize", "restore", "close"].map((name) => (
        <button key={name} type="button" aria-label={name}>
          <Icon name={name} />
        </button>
      ))}
    </div>
    <div className="absolute right-0 top-[75px] flex w-[39px] flex-col border-l border-t border-[#828282]">
      {taskTabs.map((name, i) => (
        <button
          key={name}
          type="button"
          aria-label={name}
          className={`flex h-9 items-center justify-center border-b border-[#828282] ${i === 0 ? "bg-[#f7f7f7]" : "bg-[#d6d6d6]"}`}
        >
          <Icon name={name} />
        </button>
      ))}
    </div>
  </>
);

const App = () => {
  return (
    <div className="relative flex h-screen flex-col overflow-hidden bg-[#f7f7f7] font-['Open_Sans','Noto_Sans_CJK_SC',sans-serif]">
      <Ribbon />
      <main className="relative flex min-h-0 flex-1 flex-col">
        <Canvas />
        <div className="relative flex min-h-0 flex-1 flex-col">
          <CommandTabs />
          <div className="flex min-h-0 flex-1">
            <SideBars />
            <TreePanel />
          </div>
          <ViewOverlay />
        </div>
      </main>
      <footer className="flex h-[21px] shrink-0 border-t border-[#828282] bg-[#f7f7f7] pl-[115px] text-[19px] leading-5 text-black">
        <button type="button" className="w-[71px] border-l border-[#828282] pl-1">
          模型
        </button>
        <button type="button" className="w-32 whitespace-nowrap border-x border-[#828282] bg-[#d4d4d4] pr-2">
          运动算例 1
        </button>
      </footer>
      <div className="absolute bottom-1.5 right-1 whitespace-nowrap text-[39px] font-light leading-[60px] text-[#e9e9e9] [text-shadow:1px_1px_1px_#888]">
        CSDN @花开月满西楼
      </div>
    </div>
  );
};

export default App;
